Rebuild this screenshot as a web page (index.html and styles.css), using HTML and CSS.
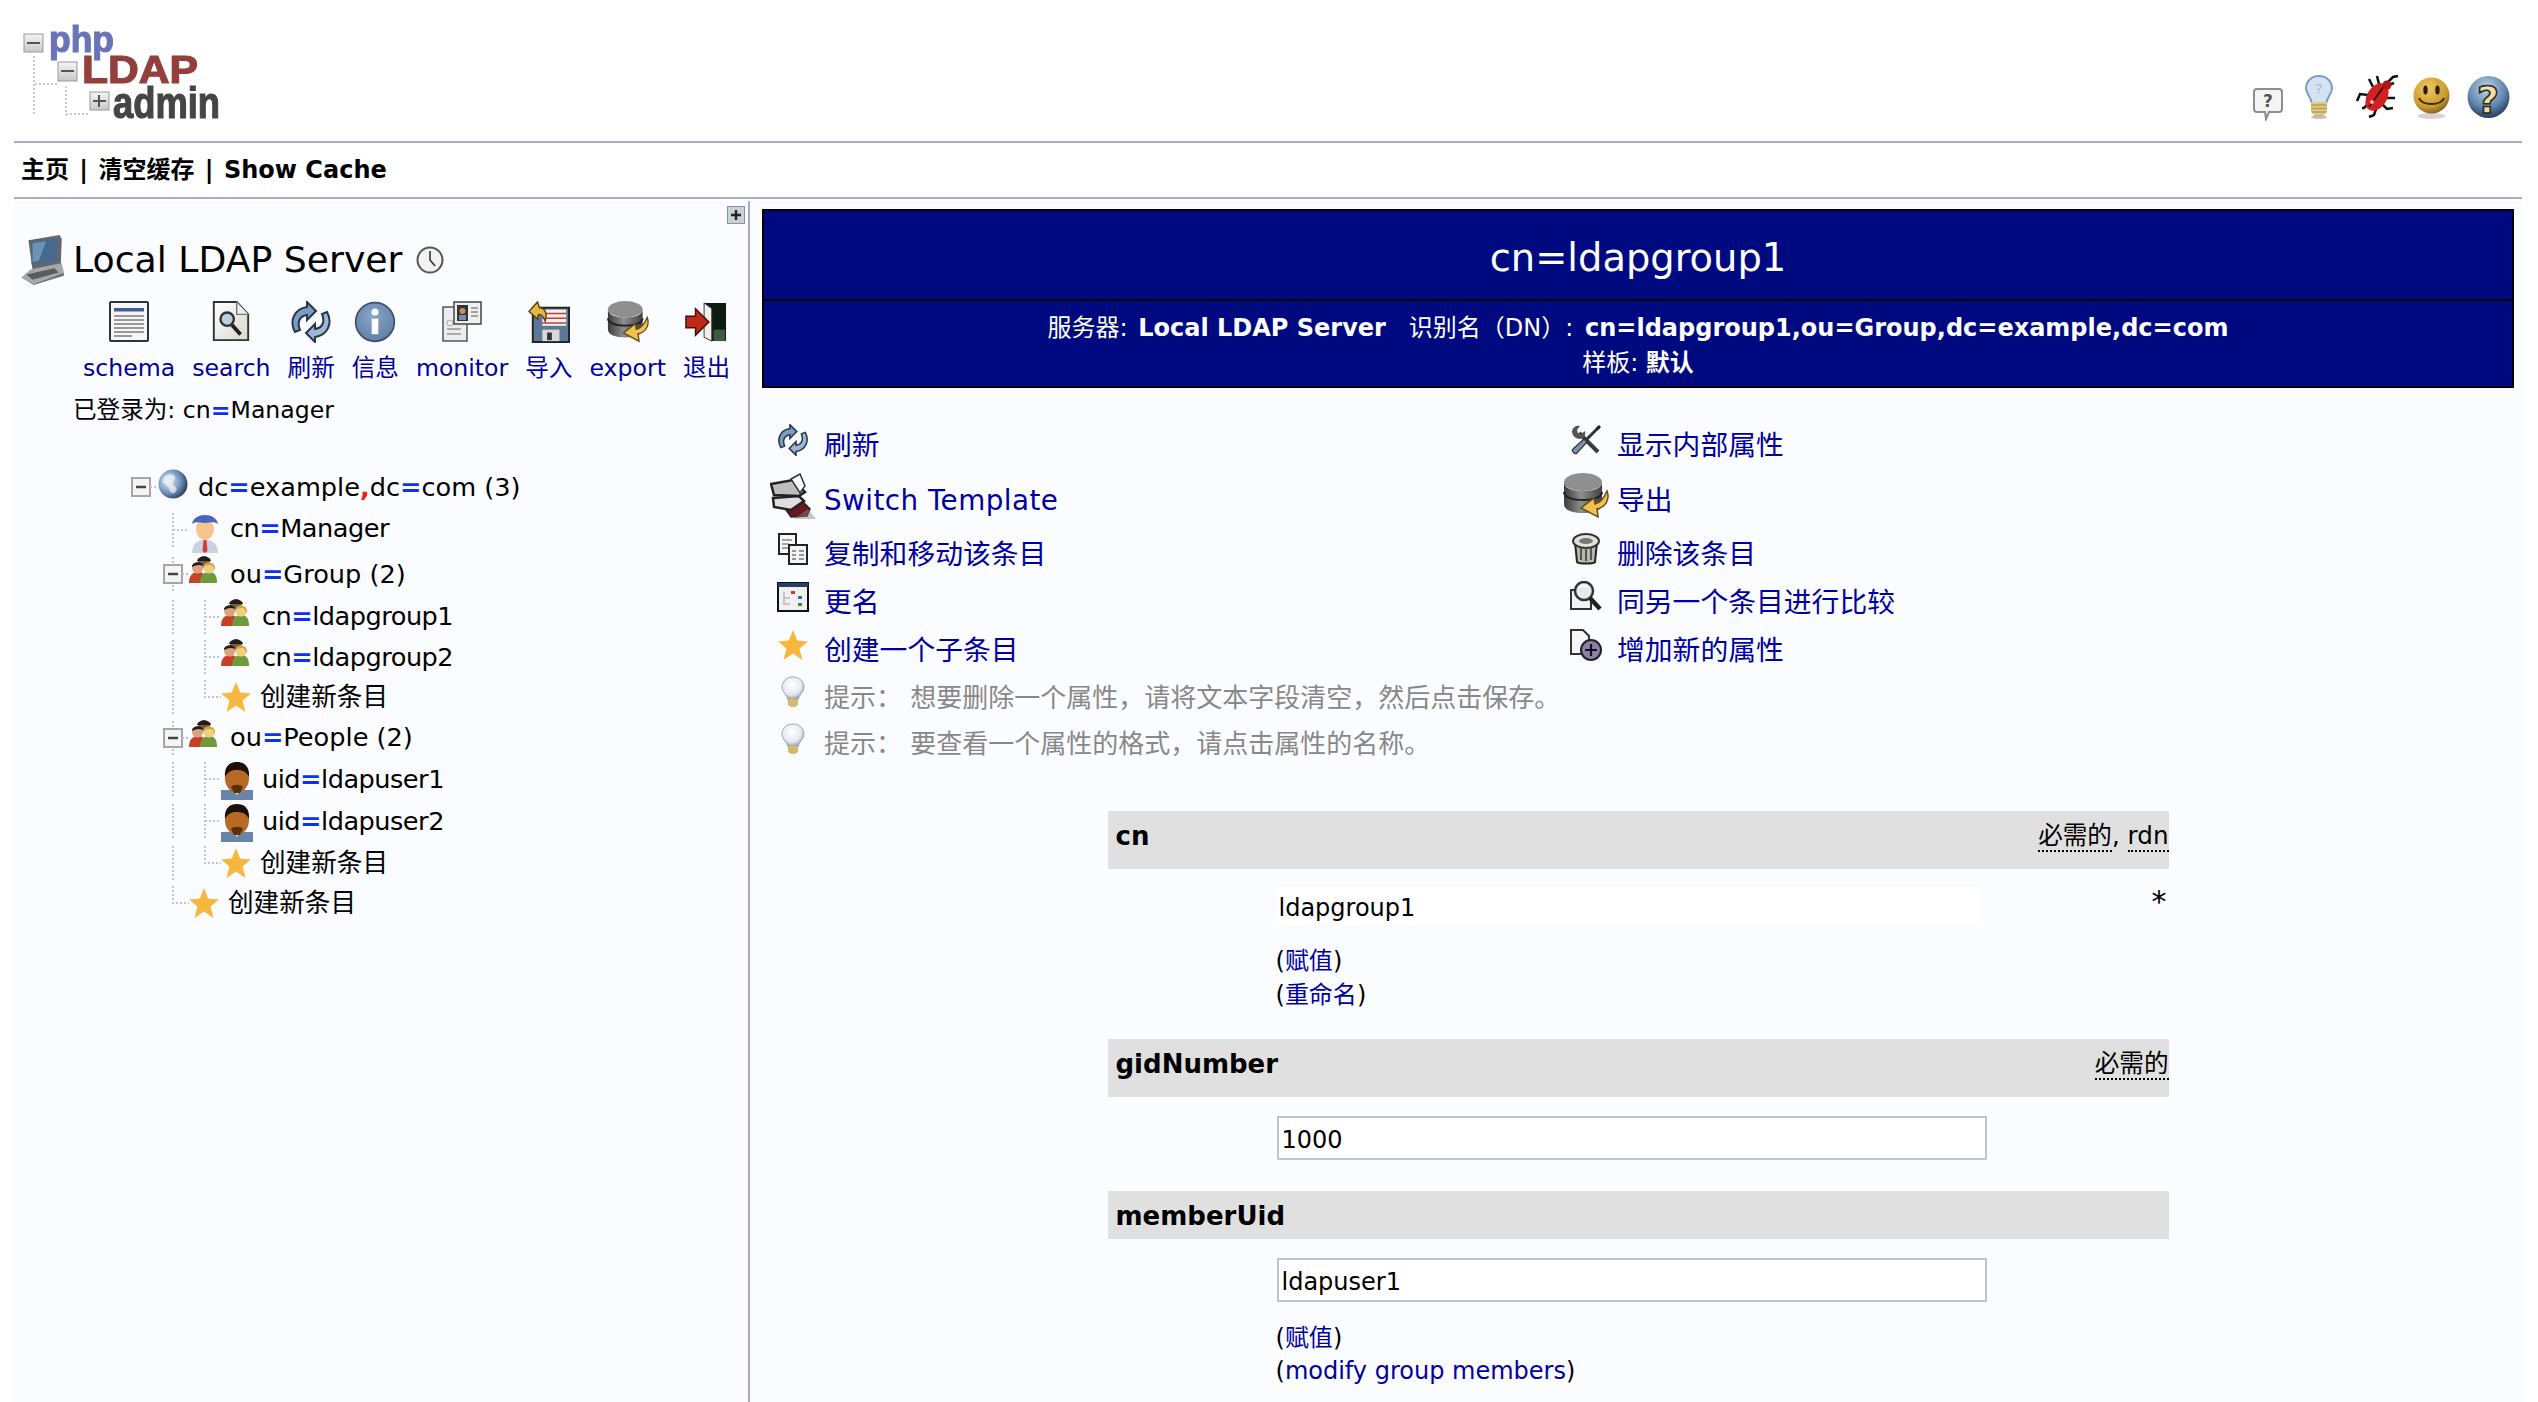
FILE: index.html
```html
<!DOCTYPE html>
<html lang="zh">
<head>
<meta charset="utf-8">
<title>phpLDAPadmin</title>
<link rel="stylesheet" href="styles.css">
</head>
<body>
<svg class="defs" xmlns="http://www.w3.org/2000/svg" aria-hidden="true">
  <defs>
    <radialGradient id="gSmile" cx="40%" cy="30%" r="75%"><stop offset="0" stop-color="#f0c860"/><stop offset=".7" stop-color="#c99a30"/><stop offset="1" stop-color="#7a5a18"/></radialGradient>
    <radialGradient id="gHelp" cx="45%" cy="30%" r="75%"><stop offset="0" stop-color="#c4d4e4"/><stop offset=".6" stop-color="#5f86ad"/><stop offset="1" stop-color="#1d3048"/></radialGradient>
    <radialGradient id="gGlobe" cx="35%" cy="40%" r="75%"><stop offset="0" stop-color="#e8eef6"/><stop offset=".55" stop-color="#6f93bb"/><stop offset="1" stop-color="#12233c"/></radialGradient>
    <radialGradient id="gInfo" cx="45%" cy="35%" r="70%"><stop offset="0" stop-color="#8ba6c6"/><stop offset="1" stop-color="#5d7ea6"/></radialGradient>
    <radialGradient id="gBulb" cx="45%" cy="35%" r="65%"><stop offset="0" stop-color="#ffffff"/><stop offset=".65" stop-color="#e6e9f0"/><stop offset="1" stop-color="#8f96a4"/></radialGradient>
    <linearGradient id="gDb" x1="0" y1="0" x2="1" y2="0"><stop offset="0" stop-color="#3c3c3c"/><stop offset=".45" stop-color="#8e8e8e"/><stop offset="1" stop-color="#404040"/></linearGradient>
    <linearGradient id="gPage" x1="0" y1="0" x2="1" y2="1"><stop offset="0" stop-color="#ffffff"/><stop offset="1" stop-color="#d8d8d0"/></linearGradient>
    <linearGradient id="gBox" x1="0" y1="0" x2="0" y2="1"><stop offset="0" stop-color="#f4f4f4"/><stop offset="1" stop-color="#c8c8c8"/></linearGradient>

    <symbol id="i-comment" viewBox="0 0 30 34"><path d="M4 2h22a3 3 0 0 1 3 3v17a3 3 0 0 1-3 3H16l-3 7-1-7H4a3 3 0 0 1-3-3V5a3 3 0 0 1 3-3z" fill="#f4f4f4" stroke="#8e8e8e" stroke-width="2"/><text x="15" y="20" text-anchor="middle" class="svg-q" fill="#555">?</text></symbol>
    <symbol id="i-bulbblue" viewBox="0 0 28 44"><path d="M14 1C6 1 1 7 1 13c0 6 5 9 6 16h14c1-7 6-10 6-16C27 7 22 1 14 1z" fill="#d4e2f4" stroke="#7c9cc8" stroke-width="2"/><text x="14" y="19" text-anchor="middle" class="svg-q2" fill="#a8bcd8">?</text><path d="M6 27h16v10l-4 4h-8l-4-4z" fill="#e0cc80"/><path d="M6 30h16M6 33.500h16M7 37h14" stroke="#b8a050" stroke-width="1.500"/><ellipse cx="14" cy="42" rx="8" ry="2" fill="#9a9a9a" opacity=".6"/></symbol>
    <symbol id="i-bug" viewBox="0 0 45 47"><g stroke="#111" stroke-width="2.500" fill="none"><path d="M18 14 14 6M24 11l-2-8M32 10l6-6 5-1M31 13l8-3M13 22l-8-1-3 7M14 30l-5 5-2 0M21 36l-2 6-5 2M27 31l5 5 6-1M31 25l9 0"/></g><ellipse cx="22" cy="24" rx="10" ry="15" transform="rotate(32 22 24)" fill="#d42020"/><path d="M14 34 29 13" stroke="#2a0a0a" stroke-width="1.500"/><circle cx="32" cy="12" r="4.500" fill="#b01818"/><circle cx="17" cy="29" r="2" fill="#f2b0b0"/></symbol>
    <symbol id="i-smile" viewBox="0 0 37 42"><ellipse cx="18.500" cy="39" rx="14" ry="3" fill="#aaa" opacity=".5"/><circle cx="18.500" cy="18.500" r="18" fill="url(#gSmile)"/><ellipse cx="12.500" cy="13" rx="2.200" ry="4.500" fill="#2b1d05"/><ellipse cx="24.500" cy="13" rx="2.200" ry="4.500" fill="#2b1d05"/><path d="M6 21c3 8 22 8 25 0" fill="none" stroke="#3a2a08" stroke-width="2"/></symbol>
    <symbol id="i-help" viewBox="0 0 43 45"><circle cx="21.500" cy="22" r="21" fill="url(#gHelp)"/><text x="21" y="38" text-anchor="middle" class="svg-help" fill="#f0e0a0" stroke="#2a2a2a" stroke-width="1.600">?</text></symbol>
    <symbol id="i-plus" viewBox="0 0 18 18"><rect x=".5" y=".5" width="17" height="17" fill="#c8d2d2" stroke="#8a9494"/><path d="M9 4v10M4 9h10" stroke="#222" stroke-width="2.400"/></symbol>
    <symbol id="i-server" viewBox="0 0 42 48"><path d="M7 5 37 0l2 4-1 26-27 4z" fill="#63676e"/><path d="M10 7 35 3l-1 22-24 3z" fill="#46698e"/><path d="M11 8l13-2-7 19-6 1z" fill="#6e92b6"/><path d="M9 33 39 27l2 9L12 47 0 41z" fill="#a4a8aa"/><path d="M5 38 32 32l4 4-25 7z" fill="#585c60"/><path d="M1 41l11 6 29-11v3L12 48z" fill="#707070"/></symbol>
    <symbol id="i-clock" viewBox="0 0 28 28"><circle cx="14" cy="14" r="12.500" fill="#f2f2f2" stroke="#555" stroke-width="2"/><path d="M14 5v9l5 6" fill="none" stroke="#333" stroke-width="1.600"/></symbol>
    <symbol id="i-schema" viewBox="0 0 42 42"><rect x="2" y="1" width="38" height="39" rx="1" fill="#f6f6f6" stroke="#333" stroke-width="2"/><rect x="6" y="7" width="30" height="3.500" fill="#3e5f8f"/><path d="M6 15h30M6 19h30M6 23h30M6 27h30M6 31h30M6 35h18" stroke="#9a9a9a" stroke-width="2"/></symbol>
    <symbol id="i-search" viewBox="0 0 40 44"><path d="M2 1h24l12 13v27H2z" fill="url(#gPage)" stroke="#333" stroke-width="2"/><path d="M26 1v13h12" fill="#eee" stroke="#777" stroke-width="1.500"/><circle cx="16" cy="19" r="7" fill="#bcd0dc" stroke="#333" stroke-width="2.500"/><path d="m21 25 9 10" stroke="#222" stroke-width="4"/></symbol>
    <symbol id="i-refresh" viewBox="0 0 42 42"><path d="M5 31C-1 20 4 8 17 6l0-5 9 9-9 9v-5C9 15 7 22 10 29z" fill="#7d9dc0" stroke="#26364c" stroke-width="2"/><path d="M37 11c6 11 1 23-12 25v5l-9-9 9-9v5c8-1 10-8 7-15z" fill="#9cb8d6" stroke="#26364c" stroke-width="2"/></symbol>
    <symbol id="i-info" viewBox="0 0 38 38"><circle cx="19" cy="19" r="17.500" fill="url(#gInfo)" stroke="#3d4f68" stroke-width="1.500"/><circle cx="19" cy="10" r="3.200" fill="#fff"/><rect x="16" y="16" width="6" height="14" fill="#fff"/></symbol>
    <symbol id="i-monitor" viewBox="0 0 42 42"><path d="M2 6h24v34H2z" fill="#ececea" stroke="#555" stroke-width="1.500"/><path d="M6 28h14M6 33h14" stroke="#aaa" stroke-width="2"/><circle cx="9" cy="22" r="3" fill="none" stroke="#aaa"/><rect x="13" y="1" width="27" height="22" fill="#efefec" stroke="#444" stroke-width="1.500"/><rect x="16" y="4" width="11" height="16" fill="#333"/><circle cx="21.500" cy="10" r="3" fill="#c89060"/><rect x="18" y="14" width="7" height="5" fill="#6f8fb5"/><path d="M30 7h7M30 11h7M30 15h7" stroke="#888" stroke-width="1.500"/></symbol>
    <symbol id="i-import" viewBox="0 0 44 44"><rect x="5" y="7" width="38" height="36" fill="#5d7796" stroke="#222" stroke-width="2"/><rect x="15" y="9" width="25" height="17" fill="#f2f0ea"/><path d="M15 13h25M15 18h25M15 23h25" stroke="#c04040" stroke-width="1.500"/><rect x="15" y="30" width="18" height="12" fill="#d8d8d8"/><rect x="20" y="33" width="5" height="8" fill="#333"/><path d="M1 11 10 1l2 6c7 0 8 8 6 14-2-6-4-7-7-7l-1 5z" fill="#e8b840" stroke="#5a4010" stroke-width="1.500"/></symbol>
    <symbol id="i-export" viewBox="0 0 46 46"><ellipse cx="20" cy="9" rx="19" ry="9" fill="#8f8f8f"/><path d="M1 9v22c0 6 8 9 19 9s19-3 19-9V9c0 6-8 9-19 9S1 15 1 9z" fill="url(#gDb)"/><path d="M1 19c0 5 8 8 19 8s19-3 19-8" fill="none" stroke="#222" stroke-width="2"/><path d="M44 18c3 8-1 16-10 18v-1l1 9-17-9 13-10 1 6c5-1 9-6 12-13z" fill="#f0c050" stroke="#6a4c10" stroke-width="1.500"/></symbol>
    <symbol id="i-logout" viewBox="0 0 44 44"><path d="M20 2h23v40H28V8z" fill="#0c1c12"/><path d="M28 8 20 2v36l8 4z" fill="#f4f0e8" stroke="#333"/><path d="M30 30 42 30V42H30z" fill="#3e5a3e"/><path d="M1 16h10V8l14 14-14 14v-8H1z" fill="#c02818" stroke="#401008" stroke-width="1.500"/></symbol>
    <symbol id="i-box-line" viewBox="0 0 32 34"><path d="M16 0v34" stroke="#c4c4c4" stroke-width="2" stroke-dasharray="2 2"/><rect x="7" y="8" width="18" height="18" fill="#f4f4f4" stroke="#a6a6a6" stroke-width="2"/><path d="M11 17h10" stroke="#444" stroke-width="2.500"/><path d="M25 17h7" stroke="#c4c4c4" stroke-width="2" stroke-dasharray="2 2"/></symbol>
    <symbol id="i-box" viewBox="0 0 32 34"><rect x="7" y="8" width="18" height="18" fill="#f4f4f4" stroke="#a6a6a6" stroke-width="2"/><path d="M11 17h10" stroke="#444" stroke-width="2.500"/><path d="M25 17h7" stroke="#c4c4c4" stroke-width="2" stroke-dasharray="2 2"/></symbol>
    <symbol id="i-v" viewBox="0 0 32 34"><path d="M16 0v34" stroke="#c4c4c4" stroke-width="2" stroke-dasharray="2 2"/></symbol>
    <symbol id="i-t" viewBox="0 0 32 34"><path d="M16 0v34M16 17h16" fill="none" stroke="#c4c4c4" stroke-width="2" stroke-dasharray="2 2"/></symbol>
    <symbol id="i-l" viewBox="0 0 32 34"><path d="M16 0v17h16" fill="none" stroke="#c4c4c4" stroke-width="2" stroke-dasharray="2 2"/></symbol>
    <symbol id="i-globe" viewBox="0 0 30 30"><circle cx="15" cy="15" r="14.500" fill="url(#gGlobe)"/><path d="M7 7c5-3 9-2 10 1s-3 4-2 7 5 3 3 7-6 2-7-2-6-5-7-8z" fill="#f2f4f8" opacity=".7"/></symbol>
    <symbol id="i-manager" viewBox="0 0 28 38"><path d="M1 38c0-9 5-13 13-13s13 4 13 13z" fill="#c9d2de"/><path d="M12.500 25h3l1 11-2.500 2-2.500-2z" fill="#d83c30"/><ellipse cx="14" cy="14" rx="9" ry="11" fill="#f6c48e"/><path d="M1 9C2 3 8 0 14 0s12 3 13 9c-6-3-7-1-13-1S7 6 1 9z" fill="#4a66bc"/></symbol>
    <symbol id="i-group" viewBox="0 0 28 28"><circle cx="15" cy="6" r="6" fill="#7a5c48"/><path d="M8 5c1-6 13-6 14 0z" fill="#1e1e1e"/><path d="M0 27c0-7 3-11 9-11s9 4 9 11z" fill="#c8402a"/><path d="M11 27c0-7 3-11 9-11s8 4 8 11z" fill="#6f9a3c"/><circle cx="8.500" cy="12" r="5.500" fill="#d9a47c"/><path d="M3 11C3 5 14 5 14 10 10 8 7 9 3 11z" fill="#1c1c1c"/><circle cx="20" cy="12" r="5.500" fill="#f0cf80"/><path d="M14 12c0-7 12-7 12 0l-1 3c0-4-1-5-3-6-3 0-6 0-8 3z" fill="#d0a838"/></symbol>
    <symbol id="i-uid" viewBox="0 0 32 38"><rect x="0" y="28" width="32" height="10" fill="#6685a8"/><path d="M13 28h6l-3 5z" fill="#e8eef4"/><ellipse cx="16" cy="16" rx="12" ry="15" fill="#b86a24"/><path d="M4 15C3 4 9 0 16 0s13 4 12 15c-3-6-7-7-12-7S7 9 4 15z" fill="#1a1208"/><path d="M10 25c2-3 10-3 12 0l-3 6h-6z" fill="#5a3008"/></symbol>
    <symbol id="i-star" viewBox="0 0 30 30"><path d="M15 0l4.200 10.500L30 11.500l-8.500 7L24.500 30 15 23.500 5.500 30l3-11.500L0 11.500l10.800-1z" fill="#f6b73c"/></symbol>
    <symbol id="i-switch" viewBox="0 0 46 46"><path d="M14 34 30 26l10 10-3 7-16 1z" fill="#6a1820" stroke="#222" stroke-width="1.500"/><path d="M38 36l8 10H24z" fill="#888" opacity=".45"/><path d="M3 25l26-2 5 5-13 9L4 34z" fill="#dedede" stroke="#222" stroke-width="2.500"/><path d="M1 11l22-4 12 12-6 4L4 22z" fill="#bdbdbd" stroke="#222" stroke-width="2.500"/><path d="M21 6l9-5 5 12-5 7z" fill="#fafafa" stroke="#333" stroke-width="1.500"/></symbol>
    <symbol id="i-copy" viewBox="0 0 30 32"><rect x="1" y="1" width="17" height="20" fill="#f6f6f6" stroke="#222" stroke-width="2"/><path d="M4 7h10M4 11h7M4 15h7" stroke="#888" stroke-width="1.600"/><rect x="11" y="12" width="18" height="19" fill="#f4f4f4" stroke="#222" stroke-width="2"/><path d="M14 18h4M21 18h5M14 22h4M21 22h5M14 26h4M21 26h5" stroke="#777" stroke-width="1.600"/></symbol>
    <symbol id="i-rename" viewBox="0 0 32 30"><rect x="1" y="1" width="30" height="28" fill="#f0f0ee" stroke="#111" stroke-width="2"/><rect x="1" y="1" width="30" height="4" fill="#24406a"/><path d="M7 10v12h6M7 16h6" fill="none" stroke="#bbb" stroke-width="1.500"/><rect x="14" y="9" width="4" height="3" fill="#c03a30"/><rect x="21" y="14" width="4" height="3" fill="#3a6ea8"/><rect x="21" y="21" width="4" height="3" fill="#3a8a48"/></symbol>
    <symbol id="i-bulb" viewBox="0 0 24 32"><path d="M12 1C5 1 1 6 1 11c0 5 5 8 6 13h10c1-5 6-8 6-13 0-5-4-10-11-10z" fill="url(#gBulb)" stroke="#a2a8b4"/><path d="M7 23h10v6l-3 2h-4l-3-2z" fill="#d2bb68"/></symbol>
    <symbol id="i-tools" viewBox="0 0 30 30"><path d="M8 8 27 27" stroke="#3c3c3c" stroke-width="4"/><path d="M1 6c1-4 4-6 8-5L6 5l1 3 3 1 4-3c1 4-1 7-5 8C5 14 1 11 1 6z" fill="#555"/><path d="M28 2 13 17" stroke="#333" stroke-width="3"/><path d="m28 0 2 2-3 3-2-2z" fill="#222"/><path d="M13 14 2 24c-2 2 2 6 4 4l10-11z" fill="#7d94b0" stroke="#333" stroke-width="1.200"/></symbol>
    <symbol id="i-trash" viewBox="0 0 28 32"><path d="M3 9h22l-2 20c-1 2-17 2-18 0z" fill="#b8b8a8" stroke="#222" stroke-width="2"/><ellipse cx="14" cy="8" rx="13" ry="7" fill="#e4e2d8" stroke="#333" stroke-width="2"/><ellipse cx="14" cy="8" rx="7" ry="3" fill="#777"/><path d="M9 15v12M14 15v13M19 15v12" stroke="#555" stroke-width="2"/></symbol>
    <symbol id="i-compare" viewBox="0 0 32 32"><path d="M1 9h16l4 4v15H1z" fill="#f2f2f2" stroke="#333" stroke-width="2"/><circle cx="14" cy="10" r="9" fill="#e4eaf0" stroke="#333" stroke-width="2.500"/><path d="M9 7c2-3 6-3 8-1" stroke="#fff" stroke-width="2" fill="none"/><path d="m20 17 10 11" stroke="#222" stroke-width="4.500"/></symbol>
    <symbol id="i-add" viewBox="0 0 32 32"><path d="M1 1h12l6 6v18H1z" fill="#f6f6f6" stroke="#333" stroke-width="2"/><circle cx="21" cy="21" r="10" fill="#8d7fa6" stroke="#222" stroke-width="2"/><path d="M21 15v12M15 21h12" stroke="#111" stroke-width="2.200"/></symbol>
    <filter id="soft"><feGaussianBlur stdDeviation=".4"/></filter>
  </defs>
</svg>

<div class="page">
  <header class="top">
    <svg class="logo" viewBox="0 0 200 100" role="img" aria-label="phpLDAPadmin">
      <g filter="url(#soft)">
        <path d="M12 32V92M44 62V92M13 60H36M44 90H68" fill="none" stroke="#ccc" stroke-width="2" stroke-dasharray="2 2"/>
        <rect x="2" y="10" width="19" height="18" fill="url(#gBox)" stroke="#999"/><path d="M5 19h13" stroke="#555" stroke-width="2"/>
        <rect x="36" y="38" width="19" height="19" fill="url(#gBox)" stroke="#999"/><path d="M39 47h13" stroke="#555" stroke-width="2"/>
        <rect x="68" y="68" width="19" height="18" fill="url(#gBox)" stroke="#999"/><path d="M71 77h13M77 71v12" stroke="#555" stroke-width="2"/>
        <text x="27" y="28" class="logo-php" textLength="65" lengthAdjust="spacingAndGlyphs">php</text>
        <text x="60" y="59" class="logo-ldap" textLength="116" lengthAdjust="spacingAndGlyphs">LDAP</text>
        <text x="91" y="94" class="logo-admin" textLength="107" lengthAdjust="spacingAndGlyphs">admin</text>
      </g>
    </svg>
    <div class="help-icons">
      <svg class="h-comment"><use href="#i-comment"/></svg>
      <svg class="h-bulb"><use href="#i-bulbblue"/></svg>
      <svg class="h-bug"><use href="#i-bug"/></svg>
      <svg class="h-smile"><use href="#i-smile"/></svg>
      <svg class="h-help"><use href="#i-help"/></svg>
    </div>
  </header>
  <nav class="menu">主页<span class="sep"> | </span>清空缓存<span class="sep"> | </span>Show Cache</nav>

  <main class="panes">
    <aside class="side">
      <div class="side-tools"><svg class="plus"><use href="#i-plus"/></svg></div>
      <div class="server">
        <svg class="server-icon"><use href="#i-server"/></svg>
        <h1 class="server-name">Local LDAP Server</h1>
        <svg class="clock"><use href="#i-clock"/></svg>
      </div>
      <ul class="tools">
        <li><svg class="t42"><use href="#i-schema"/></svg><a>schema</a></li>
        <li><svg class="t42"><use href="#i-search"/></svg><a>search</a></li>
        <li><svg class="t42"><use href="#i-refresh"/></svg><a>刷新</a></li>
        <li><svg class="t42"><use href="#i-info"/></svg><a>信息</a></li>
        <li><svg class="t42"><use href="#i-monitor"/></svg><a>monitor</a></li>
        <li><svg class="t42"><use href="#i-import"/></svg><a>导入</a></li>
        <li><svg class="t42"><use href="#i-export"/></svg><a>export</a></li>
        <li><svg class="t42"><use href="#i-logout"/></svg><a>退出</a></li>
      </ul>
      <p class="login">已登录为: cn<b class="eq">=</b>Manager</p>
      <div class="tree">
        <div class="row h42"><svg class="cell"><use href="#i-box"/></svg><span class="ic"><svg class="s30 up6 nudge1"><use href="#i-globe"/></svg></span><span class="lab">dc<b class="eq">=</b>example<b class="cm">,</b>dc<b class="eq">=</b>com (3)</span></div>
        <div class="row h44"><i class="blank"></i><svg class="cell"><use href="#i-t"/></svg><span class="ic"><svg class="s-mgr down6 nudge2"><use href="#i-manager"/></svg></span><span class="lab tight lift">cn<b class="eq">=</b>Manager</span></div>
        <div class="row h44"><i class="blank"></i><svg class="cell"><use href="#i-box-line"/></svg><span class="ic"><svg class="s28 up8"><use href="#i-group"/></svg></span><span class="lab">ou<b class="eq">=</b>Group (2)</span></div>
        <div class="row h41"><i class="blank"></i><svg class="cell"><use href="#i-v"/></svg><svg class="cell"><use href="#i-t"/></svg><span class="ic"><svg class="s28 up8"><use href="#i-group"/></svg></span><span class="lab tight">cn<b class="eq">=</b>ldapgroup1</span></div>
        <div class="row h40"><i class="blank"></i><svg class="cell"><use href="#i-v"/></svg><svg class="cell"><use href="#i-t"/></svg><span class="ic"><svg class="s28 up8"><use href="#i-group"/></svg></span><span class="lab tight">cn<b class="eq">=</b>ldapgroup2</span></div>
        <div class="row h40"><i class="blank"></i><svg class="cell"><use href="#i-v"/></svg><svg class="cell"><use href="#i-l"/></svg><span class="ic"><svg class="s30"><use href="#i-star"/></svg></span><span class="lab new">创建新条目</span></div>
        <div class="row h41"><i class="blank"></i><svg class="cell"><use href="#i-box-line"/></svg><span class="ic"><svg class="s28 up8"><use href="#i-group"/></svg></span><span class="lab">ou<b class="eq">=</b>People (2)</span></div>
        <div class="row h42"><i class="blank"></i><svg class="cell"><use href="#i-v"/></svg><svg class="cell"><use href="#i-t"/></svg><span class="ic"><svg class="s-uid down4"><use href="#i-uid"/></svg></span><span class="lab tight">uid<b class="eq">=</b>ldapuser1</span></div>
        <div class="row h42"><i class="blank"></i><svg class="cell"><use href="#i-v"/></svg><svg class="cell"><use href="#i-t"/></svg><span class="ic"><svg class="s-uid down4"><use href="#i-uid"/></svg></span><span class="lab tight">uid<b class="eq">=</b>ldapuser2</span></div>
        <div class="row h41"><i class="blank"></i><svg class="cell"><use href="#i-v"/></svg><svg class="cell"><use href="#i-l"/></svg><span class="ic"><svg class="s30"><use href="#i-star"/></svg></span><span class="lab new">创建新条目</span></div>
        <div class="row h40"><i class="blank"></i><svg class="cell"><use href="#i-l"/></svg><span class="ic"><svg class="s30"><use href="#i-star"/></svg></span><span class="lab new">创建新条目</span></div>
      </div>
    </aside>

    <section class="content">
      <div class="banner">
        <div class="banner-title">cn=ldapgroup1</div>
        <div class="banner-sub">服务器: <b class="sv">Local LDAP Server</b>&nbsp;&nbsp;&nbsp;识别名（DN）: <b class="dn">cn=ldapgroup1,ou=Group,dc=example,dc=com</b><br>样板: <b>默认</b></div>
      </div>

      <div class="actions">
        <a class="act r56"><span class="act-ic"><svg class="a-refresh"><use href="#i-refresh"/></svg></span>刷新</a>
        <a class="act r56"><span class="act-ic"><svg class="a-tools"><use href="#i-tools"/></svg></span>显示内部属性</a>
        <a class="act r56"><span class="act-ic"><svg class="a-big"><use href="#i-switch"/></svg></span><span class="wide">Switch Template</span></a>
        <a class="act r56"><span class="act-ic"><svg class="a-big"><use href="#i-export"/></svg></span><span class="rise">导出</span></a>
        <a class="act r49"><span class="act-ic"><svg class="a-32"><use href="#i-copy"/></svg></span>复制和移动该条目</a>
        <a class="act r49"><span class="act-ic"><svg class="a-32"><use href="#i-trash"/></svg></span>删除该条目</a>
        <a class="act r48"><span class="act-ic"><svg class="a-32"><use href="#i-rename"/></svg></span>更名</a>
        <a class="act r48"><span class="act-ic"><svg class="a-32"><use href="#i-compare"/></svg></span>同另一个条目进行比较</a>
        <a class="act r47"><span class="act-ic"><svg class="a-30"><use href="#i-star"/></svg></span>创建一个子条目</a>
        <a class="act r47"><span class="act-ic"><svg class="a-32"><use href="#i-add"/></svg></span>增加新的属性</a>
        <p class="hint r48"><span class="act-ic"><svg class="a-32"><use href="#i-bulb"/></svg></span>提示： 想要删除一个属性，请将文本字段清空，然后点击保存。</p>
        <p class="hint r45"><span class="act-ic"><svg class="a-32"><use href="#i-bulb"/></svg></span>提示： 要查看一个属性的格式，请点击属性的名称。</p>
      </div>

      <form class="attrs">
        <div class="attr-head h58"><span class="attr-name">cn</span><span class="attr-note"><abbr>必需的</abbr>, <abbr>rdn</abbr></span></div>
        <div class="attr-body body-cn">
          <div class="value-line"><input class="field-ro" type="text" value="ldapgroup1" readonly><span class="req">*</span></div>
          <div class="links links-first">(<a>赋值</a>)</div>
          <div class="links">(<a>重命名</a>)</div>
        </div>
        <div class="attr-head h58"><span class="attr-name">gidNumber</span><span class="attr-note"><abbr>必需的</abbr></span></div>
        <div class="attr-body body-gid">
          <input class="field" type="text" value="1000">
        </div>
        <div class="attr-head h48"><span class="attr-name">memberUid</span></div>
        <div class="attr-body body-member">
          <input class="field" type="text" value="ldapuser1">
          <div class="links links-first">(<a>赋值</a>)</div>
          <div class="links links-en">(<a>modify group members</a>)</div>
        </div>
      </form>
    </section>
  </main>
</div>
</body>
</html>
```

FILE: styles.css
```css
* { box-sizing: border-box; }
html, body { margin: 0; padding: 0; background: #fff; }
body {
  font-family: "DejaVu Sans", "Noto Sans CJK SC", sans-serif;
  color: #000;
  font-size: 23.6px;
  height: 1402px;
  overflow: hidden;
}
.defs { position: absolute; width: 0; height: 0; }
svg { display: block; flex: none; }
.svg-q { font: bold 17px "DejaVu Sans", sans-serif; }
.svg-q2 { font: 14px "DejaVu Sans", sans-serif; }
.svg-help { font: bold 38px "DejaVu Sans", sans-serif; }

.page { margin: 0 16px 0 14px; height: 1402px; overflow: hidden; }

.top {
  height: 143px;
  border-bottom: 2px solid #aaaacc;
  display: flex;
  justify-content: space-between;
}
.logo { width: 200px; height: 100px; margin: 24px 0 0 8px; overflow: visible; }
.logo-php { font: bold 36px "Liberation Sans", sans-serif; fill: #6a74b8; stroke: #6a74b8; stroke-width: 1.2px; }
.logo-ldap { font: bold 39px "Liberation Sans", sans-serif; fill: #93403e; stroke: #93403e; stroke-width: 1.2px; }
.logo-admin { font: bold 44px "Liberation Sans", sans-serif; fill: #454545; stroke: #454545; stroke-width: 1.2px; }

.help-icons { display: flex; align-items: flex-start; padding: 73px 12px 0 0; }
.h-comment { width: 30px; height: 34px; margin: 14px 22px 0 0; }
.h-bulb { width: 28px; height: 44px; margin: 2px 22px 0 0; }
.h-bug { width: 45px; height: 47px; margin-right: 13px; }
.h-smile { width: 37px; height: 42px; margin: 4px 17px 0 0; }
.h-help { width: 43px; height: 45px; margin-top: 2px; }

.menu {
  height: 56px;
  border-bottom: 2px solid #aaaacc;
  padding: 10px 0 0 7px;
  font-size: 24px;
  font-weight: bold;
  line-height: 34px;
  margin-bottom: 2px;
}
.sep { margin: 0 2px; }

.panes { display: flex; background: #fbfcff; height: 1204px; }

.side { width: 736px; border-right: 2px solid #aaaacc; flex: none; }
.side-tools { display: flex; justify-content: flex-end; height: 36px; padding: 5px 3px 0 0; }
.plus { width: 18px; height: 18px; }
.server { display: flex; align-items: center; height: 46px; padding-left: 7px; }
.server-icon { width: 44px; height: 50px; margin-right: 8px; }
.server-name { font-size: 36.2px; font-weight: normal; margin: 0 14px 0 0; line-height: 46px; }
.clock { width: 28px; height: 28px; }

.tools { display: flex; list-style: none; margin: 18px 0 0; padding: 0 0 0 69px; gap: 17px; }
.tools li { display: flex; flex-direction: column; align-items: center; }
.tools a { color: #0000a0; line-height: 26px; margin-top: 12px; }
.t42 { width: 42px; height: 42px; }

.login { margin: 16px 0 0 59px; line-height: 26px; }
.eq { color: #1030f0; }
.cm { color: #f02010; }

.tree { margin-top: 43px; font-size: 25.6px; }
.row { display: flex; align-items: center; padding-left: 111px; }
.h40 { height: 40px; }
.h41 { height: 41px; }
.h42 { height: 42px; }
.h44 { height: 44px; }
.blank { width: 32px; flex: none; }
.cell { width: 32px; height: 34px; }
.ic { width: 32px; display: flex; justify-content: flex-start; flex: none; }
.lab { margin: 0 0 1px 9px; white-space: nowrap; line-height: 34px; }
.lab.new { margin: 0 0 0 7px; }
.tight { letter-spacing: -0.5px; }
.lab.lift { margin-bottom: 5px; }
.s28 { width: 28px; height: 28px; }
.s30 { width: 30px; height: 30px; }
.s-mgr { width: 28px; height: 38px; }
.s-uid { width: 32px; height: 38px; }
.up6 { margin-bottom: 6px; }
.up8 { margin-bottom: 8px; }
.down4 { margin-top: 4px; }
.down6 { margin-top: 8px; }
.nudge1 { margin-left: 1px; }
.nudge2 { margin-left: 2px; }

.content { flex: 1; padding: 8px 8px 0 12px; min-width: 0; }
.banner { background: #000a80; border: 2px solid #000; color: #fff; text-align: center; }
.banner-title { height: 90px; border-bottom: 2px solid #000; font-size: 38.4px; line-height: 94px; }
.banner-sub { font-size: 24px; line-height: 35px; padding: 10px 0 0; height: 85px; }
.sv { margin-left: 3px; }
.dn { margin-left: 4px; }

.actions {
  display: grid;
  grid-template-columns: 793px 1fr;
  margin: 27px 0 0 0;
  padding-left: 6px;
}
.act { display: flex; align-items: center; color: #0000a0; font-size: 27.8px; }
.wide { letter-spacing: 0.45px; margin-top: 2px; }
.rise { margin-bottom: 2px; }
.hint { grid-column: 1 / 3; display: flex; align-items: center; margin: 0; color: #888; font-size: 26px; }
.act-ic { width: 56px; display: flex; justify-content: center; flex: none; padding-right: 7px; margin-bottom: 6px; }
.r56 { height: 56px; }
.r49 { height: 49px; }
.r48 { height: 48px; }
.r47 { height: 47px; }
.r45 { height: 45px; }
.a-refresh { width: 32px; height: 32px; }
.a-tools { width: 30px; height: 30px; }
.a-big { width: 46px; height: 46px; }
.a-32 { width: 32px; height: 32px; }
.a-30 { width: 30px; height: 30px; }

.attrs { width: 1061px; margin: 47px auto 0; }
.attr-head { background: #e0e0e0; display: flex; justify-content: space-between; align-items: flex-start; padding-left: 8px; }
.h58 { height: 58px; padding-top: 7px; }
.h48 { height: 48px; padding-top: 7px; }
.attr-name { font-size: 26px; font-weight: bold; line-height: 36px; }
.attr-note { font-size: 24.6px; line-height: 36px; }
.attr-note abbr { border-bottom: 2px dotted #000; text-decoration: none; }

.attr-body { padding-left: 168px; }
.body-cn { height: 170px; padding-top: 18px; }
.body-gid { height: 94px; padding-top: 19px; }
.body-member { padding-top: 19px; }
.value-line { display: flex; justify-content: space-between; }
.field-ro { width: 705px; height: 38px; border: 0; background: #fff; padding: 4px 3px 0; font: 24px "DejaVu Sans", sans-serif; color: #000; }
.req { padding-right: 2px; font-size: 30px; line-height: 30px; }
.field { display: block; width: 710px; height: 44px; border: 2px solid #c4c4c4; background: #fff; padding: 3px 3px 0; margin-left: 1px; font: 24px "DejaVu Sans", sans-serif; color: #000; }
.links { font-size: 24px; line-height: 34px; }
.links a { color: #0000a0; }
.links-first { margin-top: 19px; }
.links-en { line-height: 32px; }
```
